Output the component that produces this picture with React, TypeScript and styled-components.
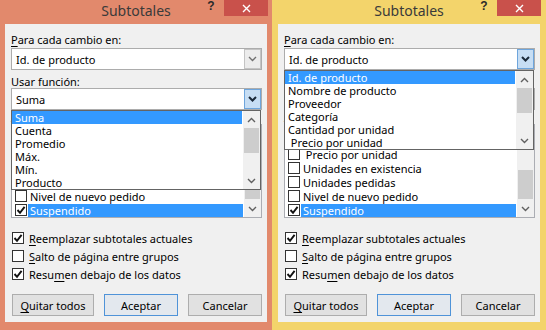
import React from 'react';
import styled, { createGlobalStyle } from 'styled-components';

const GlobalStyle = createGlobalStyle`
  html, body {
    margin: 0;
    padding: 0;
  }
  body {
    font-family: "Noto Sans", "Liberation Sans", sans-serif;
    font-size: 11px;
    color: #000;
  }
`;

const FIELDS = [
  'Id. de producto',
  'Nombre de producto',
  'Proveedor',
  'Categoría',
  'Cantidad por unidad',
  ' Precio por unidad',
  'Unidades en existencia',
  'Unidades pedidas',
  'Nivel de nuevo pedido',
  'Suspendido',
];

const FUNCTIONS = ['Suma', 'Cuenta', 'Promedio', 'Máx.', 'Mín.', 'Producto'];

const Screen = styled.div`
  display: flex;
  width: 546px;
  height: 330px;
  overflow: hidden;
`;

const Window = styled.div<{ $frame: string; $width: number }>`
  width: ${({ $width }) => $width}px;
  height: 330px;
  background: ${({ $frame }) => $frame};
  display: flex;
  flex-direction: column;
  flex-shrink: 0;
`;

const TitleBar = styled.div`
  height: 24px;
  display: grid;
  grid-template-columns: 1fr auto 1fr;
`;

const Title = styled.div`
  grid-column: 2;
  font-size: 14px;
  line-height: 22px;
  color: #3a3a3a;
`;

const Controls = styled.div<{ $right: number }>`
  grid-column: 3;
  justify-self: end;
  display: flex;
  align-items: flex-start;
  padding-right: ${({ $right }) => $right}px;
`;

const Help = styled.div`
  width: 26px;
  text-align: center;
  font-family: "Liberation Sans", sans-serif;
  font-weight: bold;
  font-size: 12px;
  line-height: 12px;
  color: #2a2a2a;
`;

const Close = styled.div`
  width: 44px;
  height: 16px;
  background: #c9514b;
  display: flex;
  align-items: center;
  justify-content: center;
`;

const Dialog = styled.div<{ $side: number }>`
  flex: 1;
  margin: 0 ${({ $side }) => $side}px 8px;
  background: #f0f0f0;
  display: flex;
  flex-direction: column;
  padding: 9px 5px 0 6px;
`;

const FieldLabel = styled.div<{ $top?: number; $bottom?: number }>`
  line-height: 13px;
  margin-top: ${({ $top }) => $top ?? 0}px;
  margin-bottom: ${({ $bottom }) => $bottom ?? 0}px;
  white-space: nowrap;
`;

const Key = styled.span`
  text-decoration: underline;
  text-underline-offset: 2px;
`;

const ComboWrap = styled.div<{ $open?: boolean }>`
  position: relative;
  z-index: ${({ $open }) => ($open ? 3 : 1)};
`;

const Combo = styled.div`
  height: 22px;
  box-sizing: border-box;
  border: 1px solid #acacac;
  background: #fff;
  display: flex;
  align-items: center;
`;

const ComboText = styled.div`
  flex: 1;
  padding-left: 4px;
  white-space: nowrap;
`;

const ComboArrow = styled.div<{ $open?: boolean }>`
  width: 17px;
  align-self: stretch;
  box-sizing: border-box;
  border: 1px solid ${({ $open }) => ($open ? '#6ea5dc' : '#c4c4c4')};
  background: ${({ $open }) => ($open ? '#c7def4' : '#ececec')};
  display: flex;
  align-items: center;
  justify-content: center;
`;

const DropList = styled.div`
  position: absolute;
  top: 100%;
  left: 0;
  right: 1px;
  height: 80px;
  box-sizing: border-box;
  border: 1px solid #646464;
  background: #fff;
  display: flex;
`;

const DropItems = styled.div`
  flex: 1;
  display: flex;
  flex-direction: column;
  padding-right: 1px;
`;

const DropItem = styled.div<{ $selected?: boolean }>`
  height: 13px;
  line-height: 13px;
  padding-left: 3px;
  white-space: pre;
  background: ${({ $selected }) => ($selected ? '#3399ff' : 'transparent')};
  color: ${({ $selected }) => ($selected ? '#fff' : '#000')};
`;

const ScrollBar = styled.div`
  width: 17px;
  background: #f0f0f0;
  display: flex;
  flex-direction: column;
  flex-shrink: 0;
`;

const ScrollButton = styled.div`
  height: 17px;
  display: flex;
  align-items: center;
  justify-content: center;
  flex-shrink: 0;
`;

const Thumb = styled.div<{ $offset: number; $size: number }>`
  margin: ${({ $offset }) => $offset}px 1px 0;
  height: ${({ $size }) => $size}px;
  background: #cdcdcd;
  flex-shrink: 0;
`;

const Track = styled.div`
  flex: 1;
`;

const ListBox = styled.div`
  height: 94px;
  box-sizing: border-box;
  border: 1px solid #abadb3;
  background: #fff;
  display: flex;
`;

const ListRows = styled.div`
  flex: 1;
  overflow: hidden;
  display: flex;
  flex-direction: column;
  justify-content: flex-end;
`;

const ListRow = styled.div`
  height: 14px;
  flex-shrink: 0;
  display: flex;
  align-items: center;
`;

const ListText = styled.div<{ $selected?: boolean }>`
  flex: 1;
  height: 13px;
  line-height: 13px;
  margin: 0 1px;
  padding-left: 2px;
  white-space: pre;
  background: ${({ $selected }) => ($selected ? '#3399ff' : 'transparent')};
  color: ${({ $selected }) => ($selected ? '#fff' : '#000')};
`;

const Box = styled.div<{ $size: number }>`
  width: ${({ $size }) => $size}px;
  height: ${({ $size }) => $size}px;
  box-sizing: border-box;
  border: 1px solid #333;
  background: #fff;
  flex-shrink: 0;
  display: flex;
  align-items: center;
  justify-content: center;
`;

const ListBoxCheck = styled(Box)`
  margin-left: 3px;
`;

const Options = styled.div`
  margin-top: 11px;
  display: flex;
  flex-direction: column;
`;

const OptionRow = styled.div`
  height: 18px;
  display: flex;
  align-items: center;
  padding-left: 1px;
  gap: 5px;
  white-space: nowrap;
`;

const Buttons = styled.div`
  margin-top: 11px;
  padding-left: 1px;
  display: flex;
  gap: 10px;
`;

const Button = styled.div<{ $width: number; $default?: boolean }>`
  width: ${({ $width }) => $width}px;
  height: 22px;
  box-sizing: border-box;
  border: 1px solid ${({ $default }) => ($default ? '#4f93d8' : '#adadad')};
  background: ${({ $default }) => ($default ? '#e3e8ee' : '#e1e1e1')};
  display: flex;
  align-items: center;
  justify-content: center;
  white-space: nowrap;
`;

const Chevron = ({ up, color = '#606060', bold }: { up?: boolean; color?: string; bold?: boolean }) => (
  <svg width="9" height="6" viewBox="0 0 9 6">
    <polyline
      points={up ? '1,5 4.5,1.5 8,5' : '1,1 4.5,4.5 8,1'}
      fill="none"
      stroke={color}
      strokeWidth={bold ? 2 : 1.4}
    />
  </svg>
);

const Tick = () => (
  <svg width="10" height="10" viewBox="0 0 10 10">
    <polyline points="1.5,5 4,7.8 8.6,1.8" fill="none" stroke="#111" strokeWidth="1.9" />
  </svg>
);

const Cross = () => (
  <svg width="9" height="9" viewBox="0 0 9 9">
    <path d="M1 1 L8 8 M8 1 L1 8" stroke="#fff" strokeWidth="1.4" />
  </svg>
);

const Scroll = ({ offset, size }: { offset: number; size: number }) => (
  <ScrollBar>
    <ScrollButton>
      <Chevron up />
    </ScrollButton>
    <Thumb $offset={offset} $size={size} />
    <Track />
    <ScrollButton>
      <Chevron />
    </ScrollButton>
  </ScrollBar>
);

const Dropdown = ({ items, selected }: { items: string[]; selected: number }) => (
  <DropList>
    <DropItems>
      {items.map((item, i) => (
        <DropItem key={item} $selected={i === selected}>
          {item}
        </DropItem>
      ))}
    </DropItems>
    <Scroll offset={0} size={25} />
  </DropList>
);

const ComboBox = ({ value, open, children }: { value: string; open?: boolean; children?: React.ReactNode }) => (
  <ComboWrap $open={open}>
    <Combo>
      <ComboText>{value}</ComboText>
      <ComboArrow $open={open}>
        <Chevron color={open ? '#1b2a3a' : '#707070'} bold={open} />
      </ComboArrow>
    </Combo>
    {children}
  </ComboWrap>
);

const SubtotalDialog = ({
  frame,
  width,
  side,
  openField,
}: {
  frame: string;
  width: number;
  side: number;
  openField: 'campo' | 'funcion';
}) => (
  <Window $frame={frame} $width={width}>
    <TitleBar>
      <Title>Subtotales</Title>
      <Controls $right={side - 1}>
        <Help>?</Help>
        <Close>
          <Cross />
        </Close>
      </Controls>
    </TitleBar>
    <Dialog $side={side}>
      <FieldLabel $bottom={2}>
        <Key>P</Key>ara cada cambio en:
      </FieldLabel>
      <ComboBox value="Id. de producto" open={openField === 'campo'}>
        {openField === 'campo' && <Dropdown items={FIELDS.slice(0, 6)} selected={0} />}
      </ComboBox>
      <FieldLabel $top={5}>
        Usar <Key>f</Key>unción:
      </FieldLabel>
      <ComboBox value="Suma" open={openField === 'funcion'}>
        {openField === 'funcion' && <Dropdown items={FUNCTIONS} selected={0} />}
      </ComboBox>
      <FieldLabel $top={1}>
        <Key>A</Key>gregar subtotal a:
      </FieldLabel>
      <ListBox>
        <ListRows>
          {FIELDS.map((field) => {
            const checked = field === 'Suspendido';
            return (
              <ListRow key={field}>
                <ListBoxCheck $size={12}>{checked && <Tick />}</ListBoxCheck>
                <ListText $selected={checked}>{field}</ListText>
              </ListRow>
            );
          })}
        </ListRows>
        <Scroll offset={28} size={29} />
      </ListBox>
      <Options>
        <OptionRow>
          <Box $size={12}>
            <Tick />
          </Box>
          <span>
            <Key>R</Key>eemplazar subtotales actuales
          </span>
        </OptionRow>
        <OptionRow>
          <Box $size={12} />
          <span>
            <Key>S</Key>alto de página entre grupos
          </span>
        </OptionRow>
        <OptionRow>
          <Box $size={12}>
            <Tick />
          </Box>
          <span>
            Resu<Key>m</Key>en debajo de los datos
          </span>
        </OptionRow>
      </Options>
      <Buttons>
        <Button $width={82}>
          <span>
            <Key>Q</Key>uitar todos
          </span>
        </Button>
        <Button $width={74} $default>
          Aceptar
        </Button>
        <Button $width={74}>Cancelar</Button>
      </Buttons>
    </Dialog>
  </Window>
);

const App = () => (
  <>
    <GlobalStyle />
    <Screen>
      <SubtotalDialog frame="#e2896c" width={272} side={5} openField="funcion" />
      <SubtotalDialog frame="#f3d46b" width={274} side={6} openField="campo" />
    </Screen>
  </>
);

export default App;
